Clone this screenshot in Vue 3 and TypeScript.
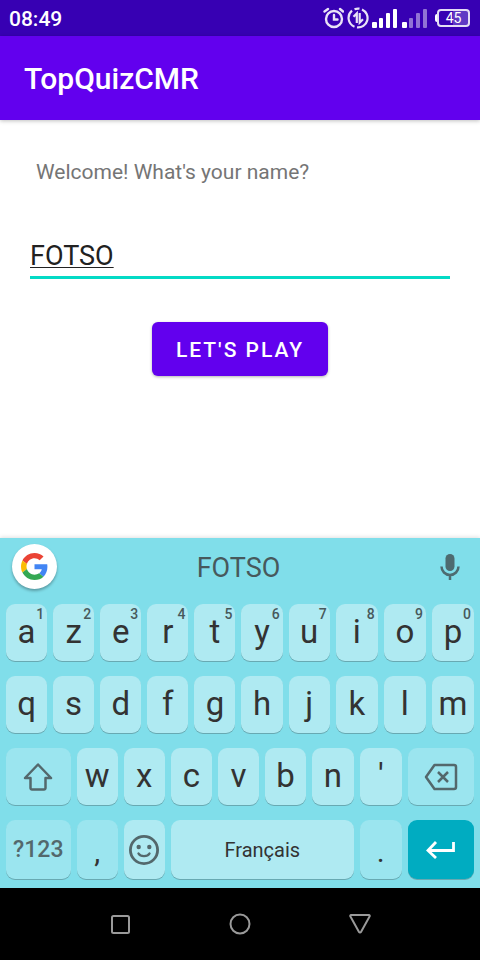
<script setup lang="ts">
import { computed, ref } from 'vue'

interface Key {
  label: string
  hint?: string
}

const toKeys = (letters: string): Key[] => [...letters].map((label) => ({ label }))

const topRow: Key[] = [...'azertyuiop'].map((label, i) => ({
  label,
  hint: String((i + 1) % 10),
}))
const homeRow = toKeys('qsdfghjklm')
const bottomRow = toKeys("wxcvbn'")

const name = ref('FOTSO')
const suggestion = computed(() => name.value)

const type = (text: string) => {
  name.value += text
}
const erase = () => {
  name.value = name.value.slice(0, -1)
}
</script>

<template>
  <div class="screen">
    <div class="status-bar">
      <time class="clock">08:49</time>
      <div class="status-icons">
        <svg class="status-glyph" viewBox="0 0 22 22" aria-hidden="true">
          <g fill="none" stroke="#e9e2f7" stroke-width="2.400" stroke-linecap="round">
            <circle cx="12" cy="12" r="8" />
            <path d="M12 8v4.500h3.500M2.500 4.500L6 2M21 4.500L18 2" />
          </g>
        </svg>
        <svg class="status-glyph" viewBox="0 0 22 22" aria-hidden="true">
          <g fill="none" stroke="#e9e2f7" stroke-width="2.200">
            <path d="M5 3.700A9.400 9.400 0 0 0 7.500 19.700M10 20.400A9.400 9.400 0 0 0 15 2.500M7.500 2.300A9.400 9.400 0 0 1 12.500 1.700" />
            <path d="M9.800 16V6.500L6.500 9.800M12.700 6v9.500L16 12.200" />
          </g>
        </svg>
        <svg class="signal" viewBox="0 0 25 19" fill="#fff" aria-hidden="true">
          <rect y="13" width="5" height="6" rx="1" />
          <rect x="7" y="9" width="4" height="10" rx="1" />
          <rect x="14" y="4" width="4" height="15" rx="1" />
          <rect x="21" width="4" height="19" rx="1" />
        </svg>
        <svg class="signal" viewBox="0 0 25 19" fill="#fff" aria-hidden="true">
          <rect y="13" width="5" height="6" rx="1" />
          <g opacity=".45">
            <rect x="7" y="9" width="4" height="10" rx="1" />
            <rect x="14" y="4" width="4" height="15" rx="1" />
            <rect x="21" width="4" height="19" rx="1" />
          </g>
        </svg>
        <div class="battery">
          <span class="battery-tip"></span>
          <span class="battery-level">45</span>
        </div>
      </div>
    </div>

    <header class="app-bar">
      <h1 class="app-title">TopQuizCMR</h1>
    </header>

    <main class="content">
      <label class="greeting" for="player-name">Welcome! What's your name?</label>
      <input id="player-name" v-model="name" class="name-field" type="text" spellcheck="false" autocomplete="off" />
      <button class="play" type="button">LET'S PLAY</button>
    </main>

    <section class="keyboard">
      <div class="suggestions">
        <button class="google" type="button" aria-label="Google">
          <svg class="google-logo" viewBox="0 0 48 48" aria-hidden="true">
            <path fill="#EA4335" d="M24 9.500c3.540 0 6.710 1.220 9.210 3.600l6.850-6.850C35.900 2.380 30.470 0 24 0 14.620 0 6.510 5.380 2.560 13.220l7.980 6.190C12.430 13.720 17.740 9.500 24 9.500z" />
            <path fill="#4285F4" d="M46.980 24.550c0-1.570-.15-3.090-.38-4.550H24v9.020h12.940c-.58 2.960-2.260 5.480-4.780 7.180l7.730 6c4.510-4.180 7.090-10.360 7.090-17.650z" />
            <path fill="#FBBC05" d="M10.530 28.590c-.48-1.450-.76-2.990-.76-4.590s.27-3.140.76-4.590l-7.980-6.190C.92 16.460 0 20.120 0 24c0 3.880.92 7.540 2.560 10.780l7.970-6.190z" />
            <path fill="#34A853" d="M24 48c6.480 0 11.930-2.130 15.890-5.810l-7.730-6c-2.150 1.450-4.920 2.300-8.160 2.300-6.260 0-11.570-4.220-13.470-9.910l-7.980 6.190C6.510 42.620 14.620 48 24 48z" />
          </svg>
        </button>
        <button class="suggestion" type="button">{{ suggestion }}</button>
        <button class="mic" type="button" aria-label="Voice input">
          <svg class="mic-icon" viewBox="0 0 20 28" aria-hidden="true">
            <rect x="5.500" y="1" width="9" height="17" rx="4.500" fill="#4d6b70" />
            <path d="M1.500 13.500a8.500 8.500 0 0 0 17 0M10 22v5" fill="none" stroke="#4d6b70" stroke-width="2.500" />
          </svg>
        </button>
      </div>

      <div class="keys">
        <button v-for="key in topRow" :key="key.label" class="key" type="button" @click="type(key.label)">
          <span class="hint">{{ key.hint }}</span>{{ key.label }}
        </button>
        <button v-for="key in homeRow" :key="key.label" class="key" type="button" @click="type(key.label)">
          {{ key.label }}
        </button>
        <button class="key soft wide" type="button" aria-label="Shift">
          <svg class="shift-icon" viewBox="0 0 30 28" aria-hidden="true">
            <path d="M15 1.500L28 15h-5.500v10a1.500 1.500 0 0 1-1.500 1.500H9A1.500 1.500 0 0 1 7.500 25V15H2z" fill="none" stroke="#53686c" stroke-width="2.500" stroke-linejoin="round" />
          </svg>
        </button>
        <button v-for="key in bottomRow" :key="key.label" class="key" type="button" @click="type(key.label)">
          {{ key.label }}
        </button>
        <button class="key soft wide" type="button" aria-label="Delete" @click="erase">
          <svg class="delete-icon" viewBox="0 0 34 28" aria-hidden="true">
            <g fill="none" stroke="#53686c" stroke-width="2.500" stroke-linejoin="round">
              <path d="M10.500 2H30a2 2 0 0 1 2 2v20a2 2 0 0 1-2 2H10.500L2 14z" />
              <path d="M14 9l10 10M24 9L14 19" />
            </g>
          </svg>
        </button>
      </div>

      <div class="keys last-row">
        <button class="key soft wide symbols" type="button">?123</button>
        <button class="key soft punctuation" type="button" @click="type(',')">,</button>
        <button class="key emoji" type="button" aria-label="Emoji">
          <svg class="emoji-icon" viewBox="0 0 30 30" aria-hidden="true">
            <circle cx="15" cy="15" r="13.600" fill="none" stroke="#53686c" stroke-width="2.800" />
            <circle cx="9.700" cy="12" r="2.200" fill="#53686c" />
            <circle cx="20.300" cy="12" r="2.200" fill="#53686c" />
            <path d="M9.500 18.500c2 3.500 9 3.500 11 0" fill="none" stroke="#53686c" stroke-width="2.400" stroke-linecap="round" />
          </svg>
        </button>
        <button class="key space" type="button" @click="type(' ')">Français</button>
        <button class="key soft punctuation" type="button" @click="type('.')">.</button>
        <button class="key enter wide" type="button" aria-label="Enter">
          <svg class="enter-icon" viewBox="0 0 30 18" aria-hidden="true">
            <path d="M27.500 1v8.500H2.500M10 1L2 9.500l8 7.500" fill="none" stroke="#fff" stroke-width="2.800" />
          </svg>
        </button>
      </div>
    </section>

    <nav class="nav-bar">
      <button class="nav-button" type="button" aria-label="Recent apps">
        <svg class="nav-icon" viewBox="0 0 24 24" aria-hidden="true">
          <rect x="4" y="4" width="17" height="17" rx="1.500" />
        </svg>
      </button>
      <button class="nav-button" type="button" aria-label="Home">
        <svg class="nav-icon" viewBox="0 0 24 24" aria-hidden="true">
          <circle cx="12" cy="12" r="9.500" />
        </svg>
      </button>
      <button class="nav-button" type="button" aria-label="Back">
        <svg class="nav-icon" viewBox="0 0 24 24" aria-hidden="true">
          <path d="M3 3h18a.8.8 0 0 1 .7 1.200L13 20a1.200 1.200 0 0 1-2 0L2.300 4.200A.8.8 0 0 1 3 3z" />
        </svg>
      </button>
    </nav>
  </div>
</template>

<style>
body {
  margin: 0;
}
</style>

<style scoped>
.screen {
  display: flex;
  flex-direction: column;
  min-height: 100vh;
  background: #fff;
  font-family: Roboto, "Liberation Sans", sans-serif;
}

.screen * {
  box-sizing: border-box;
}

button {
  margin: 0;
  padding: 0;
  border: 0;
  background: none;
  color: inherit;
  font: inherit;
  cursor: pointer;
}

svg {
  display: block;
}

.status-bar {
  display: flex;
  align-items: center;
  justify-content: space-between;
  height: 36px;
  padding: 0 10px 0 9px;
  background: #3700b3;
  color: #fff;
}

.clock {
  padding-top: 2px;
  font-size: 21px;
  font-weight: 500;
  line-height: 34px;
}

.status-icons {
  display: flex;
  align-items: center;
  gap: 3px;
}

.status-glyph {
  width: 22px;
  height: 22px;
}

.signal {
  width: 25px;
  height: 19px;
  margin-right: 2px;
}

.battery {
  display: flex;
  align-items: center;
  margin-left: 3px;
}

.battery-tip {
  width: 2px;
  height: 8px;
  border-radius: 2px 0 0 2px;
  background: #fff;
}

.battery-level {
  width: 33px;
  height: 18px;
  border: 2px solid #e4dcf5;
  border-radius: 4px;
  background: linear-gradient(to right, #3700b3 50%, #5f38c4 50%);
  font-size: 14px;
  line-height: 14px;
  text-align: center;
}

.app-bar {
  z-index: 1;
  display: flex;
  align-items: center;
  height: 84px;
  padding: 2px 24px 0;
  background: #6200ee;
  box-shadow: 0 1px 4px rgba(0, 0, 0, 0.25);
  color: #fff;
}

.app-title {
  margin: 0;
  font-size: 30px;
  font-weight: 500;
  line-height: 36px;
}

.content {
  display: flex;
  flex: 1;
  flex-direction: column;
  padding: 36px 30px;
}

.greeting {
  padding: 0 6px;
  color: #757575;
  font-size: 21px;
  line-height: 32px;
}

.name-field {
  width: 100%;
  height: 47px;
  margin-top: 44px;
  padding: 4px 0 0;
  border: 0;
  border-bottom: 3px solid #03dac5;
  border-radius: 0;
  outline: 0;
  background: none;
  color: #212121;
  font-family: inherit;
  font-size: 27px;
  line-height: 32px;
  text-decoration: underline 1px;
  text-underline-offset: 2px;
}

.play {
  align-self: center;
  height: 54px;
  margin-top: 43px;
  padding: 2px 24px 0;
  border-radius: 6px;
  background: #6200ee;
  box-shadow: 0 1px 3px rgba(0, 0, 0, 0.3);
  color: #fff;
  font-size: 21px;
  font-weight: 500;
  letter-spacing: 2px;
}

.keyboard {
  padding: 0 3px 9px;
  background: #80deea;
  box-shadow: 0 -1px 4px rgba(0, 0, 0, 0.12);
  color: #333;
}

.suggestions {
  display: grid;
  grid-template-columns: 45px 1fr 54px;
  align-items: center;
  height: 66px;
  padding: 0 0 9px 9px;
}

.google {
  display: grid;
  place-items: center;
  width: 45px;
  height: 45px;
  border-radius: 50%;
  background: #fff;
  box-shadow: 0 2px 3px rgba(0, 0, 0, 0.3);
}

.google-logo {
  width: 27px;
  height: 27px;
}

.suggestion {
  justify-self: center;
  padding: 3px 3px 0 0;
  color: #47595c;
  font-size: 27px;
}

.mic {
  display: grid;
  place-items: center;
  height: 45px;
}

.mic-icon {
  width: 20px;
  height: 28px;
}

.keys {
  display: grid;
  grid-template-columns: repeat(14, 47fr) repeat(6, 48fr);
  grid-auto-rows: 57px;
  row-gap: 15px;
}

.last-row {
  grid-auto-rows: 59px;
  margin-top: 15px;
}

.key {
  position: relative;
  display: flex;
  grid-column: span 2;
  align-items: center;
  justify-content: center;
  min-width: 0;
  margin: 0 3px;
  padding-bottom: 3px;
  border-radius: 9px;
  background: #afeaf2;
  box-shadow: 0 1px 0 #68a9b2;
  font-size: 33px;
}

.wide {
  grid-column: span 3;
  padding-bottom: 0;
}

.soft {
  background: #9be5ef;
}

.hint {
  position: absolute;
  top: 2px;
  right: 3px;
  color: #47595c;
  font-size: 14px;
  font-weight: 500;
  line-height: 16px;
}

.symbols {
  color: #53686c;
  font-size: 23px;
  font-weight: 500;
}

.punctuation {
  padding: 3px 0 0;
  font-size: 30px;
}

.emoji {
  padding-bottom: 0;
}

.space {
  grid-column: span 8;
  padding-bottom: 0;
  font-size: 20px;
}

.enter {
  background: #00acc1;
}

.shift-icon {
  width: 30px;
  height: 28px;
}

.delete-icon {
  width: 34px;
  height: 28px;
}

.emoji-icon {
  width: 30px;
  height: 30px;
}

.enter-icon {
  width: 30px;
  height: 18px;
}

.nav-bar {
  z-index: 1;
  display: flex;
  justify-content: center;
  height: 72px;
  background: #000;
}

.nav-button {
  display: grid;
  place-items: center;
  width: 25%;
}

.nav-icon {
  width: 24px;
  height: 24px;
  fill: none;
  stroke: #9a9a9a;
  stroke-width: 2;
}
</style>
